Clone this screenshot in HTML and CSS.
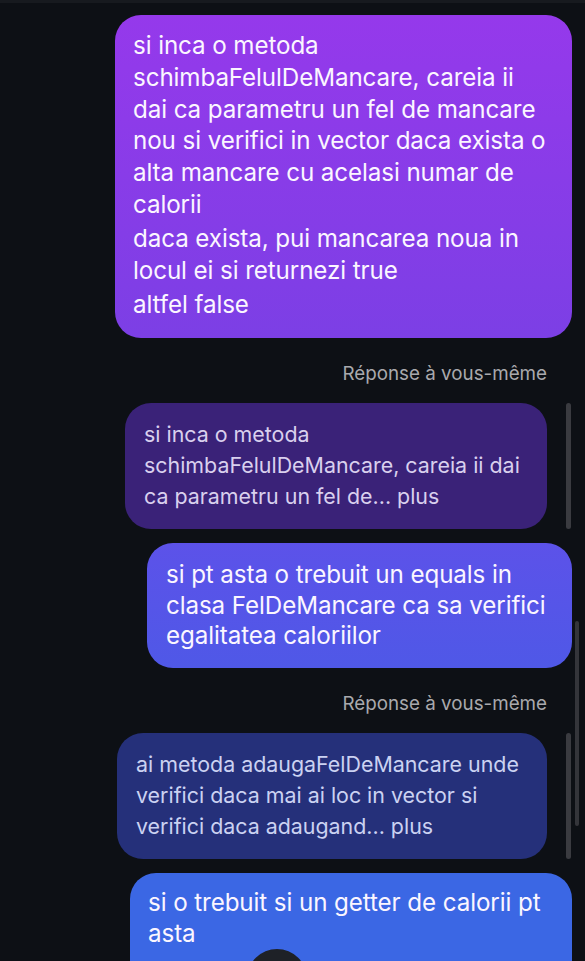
FILE: index.html
```html
<!DOCTYPE html>
<html>
<head>
<meta charset="utf-8">
<link rel="stylesheet" href="styles.css">
</head>
<body>
<div class="chat">
  <div class="row">
    <div class="bubble b-purple">
      <p>si inca o metoda<br>schimbaFelulDeMancare, careia ii<br>dai ca parametru un fel de mancare<br>nou si verifici in vector daca exista o<br>alta mancare cu acelasi numar de<br>calorii</p>
      <p>daca exista, pui mancarea noua in<br>locul ei si returnezi true</p>
      <p>altfel false</p>
    </div>
  </div>

  <div class="label">Réponse à vous-même</div>
  <div class="reply-row">
    <div class="quote q-purple">si inca o metoda<br>schimbaFelulDeMancare, careia ii dai<br>ca parametru un fel de... plus</div>
    <div class="quote-bar"></div>
  </div>
  <div class="row tight">
    <div class="bubble b-indigo">si pt asta o trebuit un equals in<br>clasa FelDeMancare ca sa verifici<br>egalitatea caloriilor</div>
  </div>

  <div class="label second">Réponse à vous-même</div>
  <div class="reply-row">
    <div class="quote q-blue">ai metoda adaugaFelDeMancare unde<br>verifici daca mai ai loc in vector si<br>verifici daca adaugand... plus</div>
    <div class="quote-bar"></div>
  </div>
  <div class="row tight">
    <div class="bubble b-blue">si o trebuit si un getter de calorii pt<br>asta</div>
  </div>
</div>
<div class="scroll-ind"></div>
<div class="fab"></div>
</body>
</html>
```

FILE: styles.css
```css
html, body {
  margin: 0;
  padding: 0;
  background: #0d1015;
  width: 585px;
  height: 961px;
  overflow: hidden;
  font-family: "Inter", "Noto Sans", sans-serif;
}
body {
  position: relative;
  border-top: 3px solid #171a1f;
  box-sizing: border-box;
}
.chat {
  display: flex;
  flex-direction: column;
  padding-top: 12px;
}
.row {
  display: flex;
  justify-content: flex-end;
  padding-right: 13px;
}
.row.tight {
  margin-top: 14px;
}
.bubble {
  color: #fbf6ff;
  font-size: 24.2px;
  line-height: 31.8px;
  border-radius: 26px;
  box-sizing: border-box;
  letter-spacing: -0.1px;
  white-space: nowrap;
}
.bubble p {
  margin: 0;
}
.bubble p + p {
  margin-top: 2.5px;
}
.b-purple {
  width: 457px;
  padding: 15px 10px 17px 18px;
  background: linear-gradient(180deg, #9539eb 0%, #7c3fe5 100%);
}
.b-indigo {
  width: 425px;
  padding: 17px 10px 16px 19px;
  line-height: 30.5px;
  background: linear-gradient(180deg, #5c52e9 0%, #4f58e7 100%);
}
.b-blue {
  width: 442px;
  height: 110px;
  padding: 14px 10px 0 18px;
  line-height: 31px;
  background: #3b67e4;
  border-bottom-left-radius: 0;
  border-bottom-right-radius: 0;
}
.label {
  align-self: flex-end;
  margin-right: 38px;
  margin-top: 25px;
  color: #a9a9ad;
  font-size: 18.8px;
  line-height: 22px;
}
.label.second {
  margin-top: 25px;
}
.reply-row {
  display: flex;
  justify-content: flex-end;
  align-items: stretch;
  gap: 19px;
  padding-right: 14px;
  margin-top: 18px;
}
.quote {
  font-size: 21.4px;
  line-height: 31px;
  border-radius: 26px;
  box-sizing: border-box;
  padding: 16px 10px 16px 19px;
  height: 126px;
  white-space: nowrap;
}
.q-purple {
  width: 422px;
  background: #3a2278;
  color: #d9d0ee;
}
.q-blue {
  width: 430px;
  background: #25307a;
  color: #cbd2f2;
}
.quote-bar {
  width: 5px;
  border-radius: 3px;
  background: #3a3b40;
}
.scroll-ind {
  position: absolute;
  left: 575px;
  top: 618px;
  width: 4px;
  height: 205px;
  border-radius: 2px;
  background: #34353a;
}
.fab {
  position: absolute;
  left: 247px;
  top: 946px;
  width: 60px;
  height: 60px;
  border-radius: 50%;
  background: #1e2127;
}
```
